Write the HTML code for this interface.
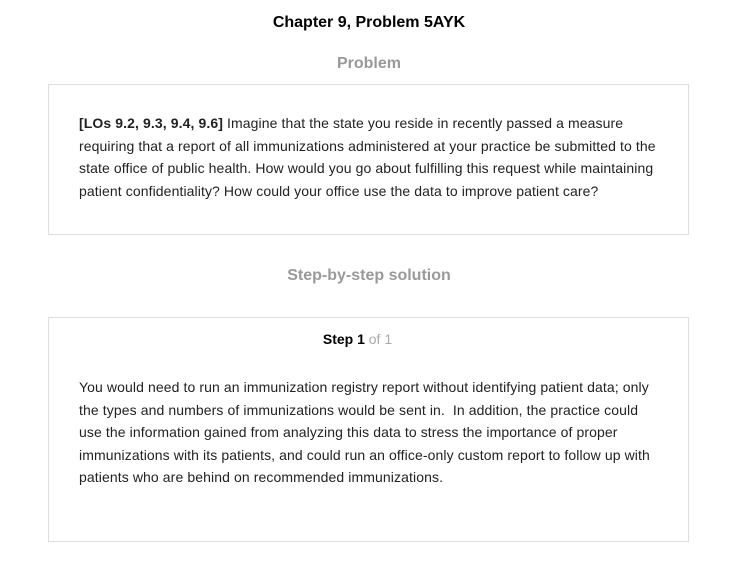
<!DOCTYPE html>
<html><head><style>
body{margin:0;width:738px;height:568px;background:#fff;font-family:"Liberation Sans",Arial,sans-serif;position:relative;overflow:hidden}
.a{position:absolute;left:0;width:738px;text-align:center;font-weight:bold}
.box{position:absolute;left:48px;width:641px;border:1px solid #ddd;box-sizing:border-box}
p{margin:0;position:absolute;left:30px;width:600px;font-size:14px;letter-spacing:0.1px;line-height:22.5px;color:#222;white-space:nowrap}
</style></head><body>
<div class="a" style="top:14px;font-size:16px;color:#000">Chapter 9, Problem 5AYK</div>
<div class="a" style="top:55px;font-size:16px;color:#999">Problem</div>
<div class="box" style="top:84px;height:151px">
<p style="top:27px"><b>[LOs 9.2, 9.3, 9.4, 9.6]</b> Imagine that the state you reside in recently passed a measure<br>requiring that a report of all immunizations administered at your practice be submitted to the<br>state office of public health. How would you go about fulfilling this request while maintaining<br>patient confidentiality? How could your office use the data to improve patient care?</p>
</div>
<div class="a" style="top:267px;font-size:16px;color:#999">Step-by-step solution</div>
<div class="box" style="top:317px;height:225px">
<div style="position:absolute;top:13px;left:0;width:100%;text-align:center;font-size:14px;color:#000;text-indent:-22px"><b>Step 1</b> <span style="color:#aaa">of 1</span></div>
<p style="top:58px">You would need to run an immunization registry report without identifying patient data; only<br>the types and numbers of immunizations would be sent in.&nbsp; In addition, the practice could<br>use the information gained from analyzing this data to stress the importance of proper<br>immunizations with its patients, and could run an office-only custom report to follow up with<br>patients who are behind on recommended immunizations.</p>
</div>
</body></html>
